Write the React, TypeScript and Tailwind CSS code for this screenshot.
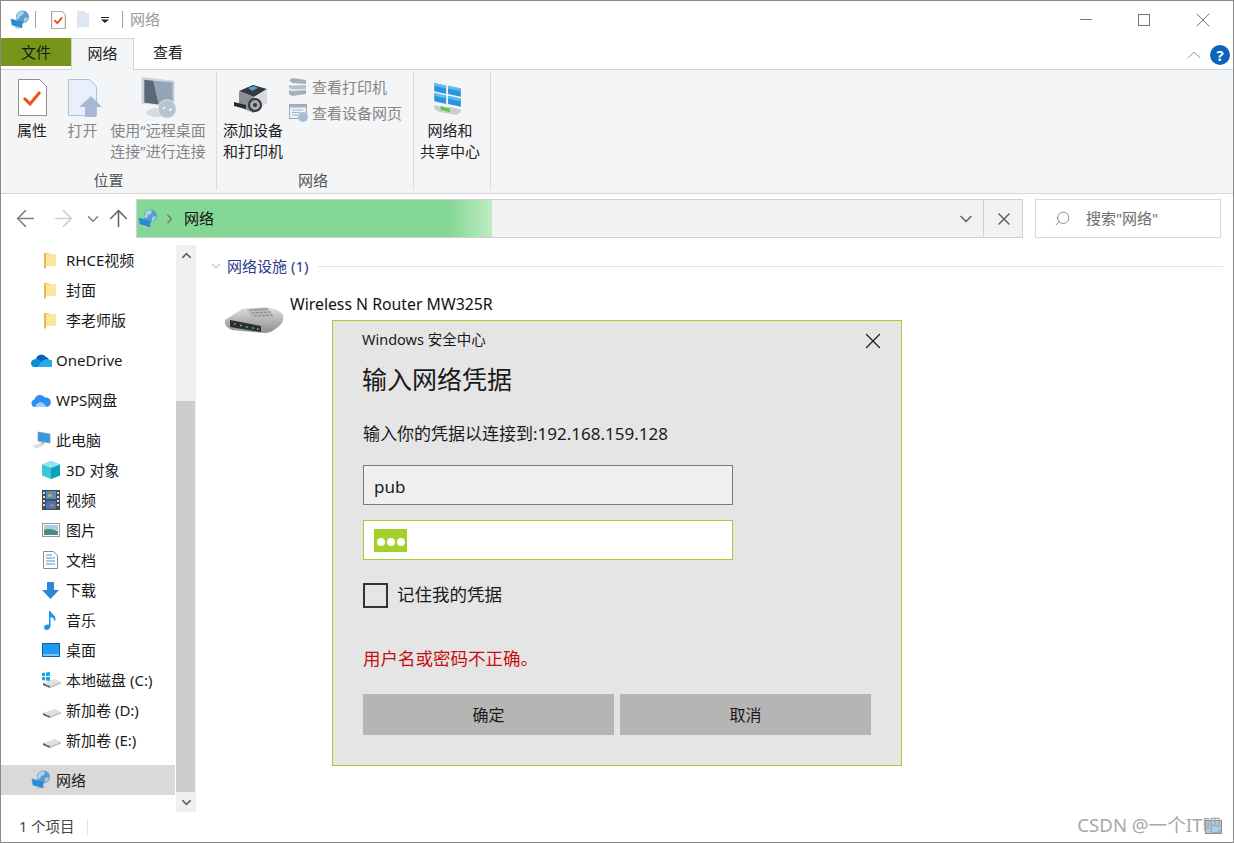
import React from "react";
import { ArrowLeft, ArrowRight, ArrowUp, ChevronDown, ChevronUp, Search, X } from "lucide-react";

const NetworkIcon = ({ size = 20 }: { size?: number }) => (
  <svg width={size} height={size} viewBox="0 0 20 20" className="shrink-0">
    <circle cx="12.5" cy="7" r="6.5" fill="#5b9bd0" />
    <path d="M8 3c2-2 5-2 6-1l-1 3-3 1-1 3-3-1z" fill="#a9d6ee" />
    <path d="M14 8l4-1c0 3-2 5-4 6z" fill="#9fd0e8" />
    <path d="M1 9l11 3v6L2 15z" fill="#1d8fe0" stroke="#5a7f9c" strokeWidth=".6" />
    <path d="M5 16.5l4 1v1.5l-4-1z" fill="#b9c5cf" />
  </svg>
);

const FolderIcon = () => (
  <svg width="13" height="17" viewBox="0 0 13 17" className="ml-[2px] shrink-0">
    <path d="M0 1h5v1h1v12H0z" fill="#f2c55c" />
    <path d="M1 2h11v12H1z" fill="#fde59b" />
    <path d="M0 1l2 1v15l-2-1z" fill="#e8b94e" />
  </svg>
);

const OneDriveIcon = () => (
  <svg width="21" height="14" viewBox="0 0 21 14" className="shrink-0">
    <path d="M5 6a5.5 5.5 0 0 1 10-2 4 4 0 0 1 3 3L9 10z" fill="#0a62b8" />
    <path d="M4 14a3.8 3.8 0 0 1-1-7.5L6 5.500l5 3.500-4 5z" fill="#0b8ade" />
    <path d="M7 14l4-6 4-2 3 1a3.400 3.400 0 0 1 2 7z" fill="#27a9ec" />
  </svg>
);

const WpsIcon = () => (
  <svg width="20" height="14" viewBox="0 0 20 14" className="shrink-0">
    <path d="M4 14a3.800 3.800 0 0 1-.5-7.500A5.800 5.800 0 0 1 14 4.500a4.800 4.800 0 0 1 2 9.500z" fill="#2f8cf0" />
    <path d="M4 14c2-5 6-6 9-3l3 3z" fill="#9ed0fa" />
  </svg>
);

const PcIcon = () => (
  <svg width="20" height="18" viewBox="0 0 20 18" className="shrink-0">
    <path d="M7 1l12 2v9L7 10z" fill="#2f9be0" stroke="#8c9aa5" strokeWidth=".8" />
    <path d="M1 15l8-3 5 2-8 3.500z" fill="#d9dde0" />
    <path d="M10 10.500l3 .5v2l-3-.5z" fill="#a9b2b8" />
  </svg>
);

const CubeIcon = () => (
  <svg width="18" height="18" viewBox="0 0 18 18" className="shrink-0">
    <path d="M9 0l9 3.500v11L9 18l-9-3.500v-11z" fill="#39c6d6" />
    <path d="M9 7l9-3.500v11L9 18z" fill="#0f9fb8" />
    <path d="M9 0l9 3.500L9 7 0 3.500z" fill="#8de6ee" />
  </svg>
);

const FilmIcon = () => (
  <svg width="18" height="20" viewBox="0 0 18 20" className="shrink-0">
    <rect width="18" height="20" fill="#4a4a4a" />
    <rect x="4" y="1" width="10" height="8" fill="#4f8fcf" />
    <rect x="4" y="11" width="10" height="8" fill="#3c76c8" />
    <rect x="6" y="4" width="4" height="3" fill="#e0a030" />
    <rect x="8" y="14" width="4" height="3" fill="#e06a30" />
    <path d="M1 2h2v2H1zM1 6h2v2H1zM1 10h2v2H1zM1 14h2v2H1zM15 2h2v2h-2zM15 6h2v2h-2zM15 10h2v2h-2zM15 14h2v2h-2z" fill="#ddd" />
  </svg>
);

const PictureIcon = () => (
  <svg width="18" height="14" viewBox="0 0 18 14" className="shrink-0">
    <rect x=".5" y=".5" width="17" height="13" fill="#fff" stroke="#9a9a9a" />
    <rect x="2" y="2" width="14" height="5" fill="#a9cfe8" />
    <path d="M2 7c4-2 8-1 14 1v4H2z" fill="#4f8a80" />
  </svg>
);

const DocIcon = () => (
  <svg width="15" height="18" viewBox="0 0 15 18" className="ml-[1px] shrink-0">
    <path d="M.5.500h10l4 4v13H.5z" fill="#fff" stroke="#8a8a8a" />
    <path d="M3 4h6M3 7h9M3 10h9M3 13h9" stroke="#4a8fd0" />
  </svg>
);

const DownloadIcon = () => (
  <svg width="17" height="17" viewBox="0 0 17 17" className="shrink-0">
    <path d="M5 0h7v8h5l-8.500 9L0 8h5z" fill="#2f86d8" />
  </svg>
);

const MusicIcon = () => (
  <svg width="12" height="19" viewBox="0 0 12 19" className="ml-[2px] shrink-0">
    <path d="M5 0h1.500c.5 3 5 4 5 8 0 1-.5 2-1 2.500.3-3-2.500-4-4-4.500V15c0 2.500-2 4-4 4S0 17.500 0 16s2-3 5-2.500z" fill="#1b94e8" />
  </svg>
);

const DesktopIcon = () => (
  <svg width="18" height="14" viewBox="0 0 18 14" className="shrink-0">
    <rect x=".5" y=".5" width="17" height="13" fill="#1e9bf0" stroke="#0a5fa8" />
    <path d="M1 12h16" stroke="#cfe9fb" />
  </svg>
);

const DriveIcon = ({ windows = false }: { windows?: boolean }) => (
  <svg width="20" height="16" viewBox="0 0 20 16" className="shrink-0">
    {windows && <path d="M0 1l3-.5V4H0zM4 .4L8 0v4H4zM0 5h3v3.500L0 8zM4 5h4v4L4 8.500z" fill="#14a7ee" />}
    <path d="M1 11l12-4 6 3-11 4.500z" fill="#dfdfdf" />
    <path d="M1 11l7 3.500V16l-7-3z" fill="#555" />
    <path d="M8 14.500L19 10v1.500L8 16z" fill="#b8b8b8" />
    <rect x="5" y="13" width="2" height="1" fill="#35b04a" />
  </svg>
);

const SideRow = ({ icon, label, indent, selected }: { icon: React.ReactNode; label: string; indent: "sub" | "top"; selected?: boolean }) => (
  <div className={`flex h-[30px] w-[174px] items-center ${selected ? "bg-[#d9d9d9]" : ""} ${indent === "sub" ? "pl-[41px]" : "pl-[30px]"}`}>
    <span className={`flex shrink-0 items-center justify-start ${indent === "sub" ? "w-[24px]" : "w-[25px]"}`}>{icon}</span>
    <span className="whitespace-nowrap text-[15px] leading-none text-[#1a1a1a]">{label}</span>
  </div>
);

const RibbonLarge = ({ icon, lines, width, muted, top }: { icon: React.ReactNode; lines: string[]; width: string; muted?: boolean; top: string }) => (
  <div className={`flex shrink-0 flex-col items-center ${width}`}>
    <div className={`flex h-[46px] items-start justify-center ${top}`}>{icon}</div>
    <div className={`mt-[2px] text-center text-[15px] leading-[21px] whitespace-nowrap ${muted ? "text-[#858585]" : "text-[#222]"}`}>
      {lines.map((l) => (
        <div key={l}>{l}</div>
      ))}
    </div>
  </div>
);

const PropertiesIcon = ({ small }: { small?: boolean }) => (
  <svg width={small ? 15 : 29} height={small ? 18 : 37} viewBox="0 0 29 37" className="shrink-0">
    <path d="M.5.500h21l7 7v29H.5z" fill="#fff" stroke="#8e8e8e" strokeWidth={small ? 2 : 1} />
    <path d="M6 19l6 6L22 13" fill="none" stroke="#e9541c" strokeWidth={small ? 4 : 3} />
  </svg>
);

const OpenIcon = () => (
  <svg width="35" height="39" viewBox="0 0 35 39" className="shrink-0">
    <path d="M.5.500h21l7 7v29H.5z" fill="#e9f0fb" stroke="#aebfd8" />
    <path d="M23 17l11 11h-6v10H17V28h-6z" fill="#a5b8d4" />
  </svg>
);

const RemoteIcon = () => (
  <svg width="40" height="42" viewBox="0 0 40 46" className="shrink-0">
    <path d="M2 0l36 4v28l-36-3z" fill="#c9d2dc" />
    <path d="M5 3l10 1 6 26-16-2z" fill="#5a6877" />
    <path d="M15 4l21 2v23l-15 1z" fill="#95a5b8" />
    <ellipse cx="20" cy="39" rx="13" ry="5" fill="#d5dbe2" />
    <circle cx="30" cy="35" r="10" fill="#b6c3d3" stroke="#e8ecf1" />
    <path d="M25 35l3-2M35 35l-3 2" stroke="#fff" strokeWidth="1.500" />
  </svg>
);

const PrinterIcon = () => (
  <svg width="36" height="30" viewBox="0 0 36 30" className="shrink-0">
    <path d="M5 6l14-6 14 4-13 8z" fill="#35393f" />
    <path d="M14 3l6-2 4 2-6 3z" fill="#4aa0d8" />
    <path d="M5 6l15 6v16L5 22z" fill="#8b8f94" />
    <path d="M20 12l13-8v14l-13 10z" fill="#d9dadb" />
    <path d="M0 17l12 3v4L0 21z" fill="#2b2b2b" />
    <circle cx="21" cy="20" r="6" fill="#a6a9ad" stroke="#2f3236" strokeWidth="2" />
    <circle cx="21" cy="20" r="2" fill="#33363a" />
  </svg>
);

const ViewPrintersIcon = () => (
  <svg width="17" height="18" viewBox="0 0 17 18" className="shrink-0">
    <path d="M0 2l4-2 13 2v4L3 5z" fill="#a5b0bd" />
    <path d="M0 7l3 .5L17 7v4L3 11.500 0 10z" fill="#b6c0cc" />
    <path d="M0 12l3 1 14-1v4l-14 2-3-2z" fill="#a5b0bd" />
  </svg>
);

const ViewPageIcon = () => (
  <svg width="19" height="18" viewBox="0 0 19 18" className="shrink-0">
    <rect x=".5" y=".5" width="17" height="14" fill="#eef2f6" stroke="#9aa9b9" />
    <path d="M1 1h16v2.500H1z" fill="#9fb0c3" />
    <path d="M3 6h11M3 8.500h8M3 11h6" stroke="#a9b6c4" />
    <circle cx="14" cy="13" r="5" fill="#a9bdd1" />
  </svg>
);

const SharingIcon = () => (
  <svg width="30" height="33" viewBox="0 0 32 36" className="shrink-0">
    <path d="M1 0l13 3v9L1 9zM16 3l14 3v9l-14-3zM1 11l13 3v9L1 20zM16 14l14 3v9l-14-3z" fill="#2a95dd" />
    <path d="M1 0l13 3v3L1 3zM16 3l14 3v3L16 6zM1 11l13 3v3L1 14zM16 14l14 3v3l-14-3z" fill="#5fbdf0" />
    <path d="M1 24l12 3 5-1 12 3v3l-5 3-20-4-4-3z" fill="#c8cdd0" />
    <path d="M8 25l10 3v4L8 29z" fill="#5fc24a" />
  </svg>
);

const RouterIcon = () => (
  <svg width="60" height="28" viewBox="0 0 60 28" className="shrink-0">
    <defs>
      <linearGradient id="routerBody" x1="0" y1="0" x2="0" y2="1">
        <stop offset="0" stopColor="#e0e0e0" />
        <stop offset="1" stopColor="#8d8d8d" />
      </linearGradient>
    </defs>
    <path d="M1 14L18 3 42 1c6 1 14 3 17 8 1 6-1 9-5 12-4 3-8 6-13 6L8 24C3 22 0 19 1 14z" fill="url(#routerBody)" />
    <path d="M22 3l21-1 8 9-21 3z" fill="#b9b9b9" />
    <path d="M26 4l18-1M28 7l19-1M30 10l19-1" stroke="#8f8f8f" strokeWidth="1.200" strokeDasharray="3 1" />
    <path d="M6 14l31 6v6L6 21z" fill="#2b2f33" />
    <path d="M10 18h1.500M16 19.500h1.500M22 21h1.500M28 22h1.500M33 23h1.500" stroke="#62e06a" strokeWidth="1.500" />
  </svg>
);

export default function App() {
  return (
    <div className="relative h-[843px] w-[1234px] overflow-hidden border border-[#8a8a8a] bg-white font-['Noto_Sans','Noto_Sans_CJK_SC',sans-serif] text-[#222]">
      {/* title bar */}
      <div className="flex h-[37px] items-center pl-[9px]">
        <NetworkIcon />
        <span className="ml-[5px] h-[17px] w-px bg-[#a0a0a0]" />
        <span className="ml-[15px]">
          <PropertiesIcon small />
        </span>
        <svg width="13" height="18" viewBox="0 0 13 18" className="ml-[11px] shrink-0">
          <path d="M0 0h8v2h4v14H3l-3 2z" fill="#dce6f5" />
        </svg>
        <svg width="8" height="6" viewBox="0 0 8 6" className="ml-[11px] shrink-0">
          <path d="M0 0h8v1H0zM0 2.500h8L4 6z" fill="#222" />
        </svg>
        <span className="ml-[13px] h-[17px] w-px bg-[#a0a0a0]" />
        <span className="ml-[7px] text-[15px] text-[#9a9a9a]">网络</span>
        <div className="ml-auto flex items-center pr-[1px] text-[#777]">
          <div className="flex w-[58px] justify-center">
            <span className="h-px w-[12px] bg-[#777]" />
          </div>
          <div className="flex w-[58px] justify-center">
            <span className="h-[12px] w-[12px] border border-[#777]" />
          </div>
          <div className="flex w-[59px] justify-center">
            <X size={24} strokeWidth={1} />
          </div>
        </div>
      </div>

      {/* tabs */}
      <div className="flex h-[32px] items-start border-b border-[#d5d5d5]">
        <div className="flex h-[28px] w-[70px] items-center justify-center bg-[#76951a] text-[15px] text-[#1a1a1a]">文件</div>
        <div className="flex h-[32px] w-[63px] items-center justify-center border-x border-t border-[#d5d5d5] bg-[#f4f5f7] pb-[3px] text-[15px]">网络</div>
        <div className="flex h-[28px] w-[68px] items-center justify-center text-[15px]">查看</div>
        <div className="ml-auto flex items-center pt-[5px] pr-[3px]">
          <ChevronUp size={24} strokeWidth={1} className="mr-[4px] text-[#9a9a9a]" />
          <div className="flex h-[20px] w-[20px] items-center justify-center rounded-full bg-[#0a63bd] text-[15px] leading-none font-bold text-white">?</div>
        </div>
      </div>

      {/* ribbon */}
      <div className="flex h-[124px] border-b border-[#d5d5d5] bg-[#f4f5f7] pt-[2px]">
        <div className="flex h-[118px] w-[216px] shrink-0 flex-col border-r border-[#dcdcdc]">
          <div className="flex h-[98px] pl-[3px]">
            <RibbonLarge width="w-[56px]" top="pt-[7px]" lines={["属性"]} icon={<PropertiesIcon />} />
            <RibbonLarge width="w-[45px]" top="pt-[7px] pl-[5px]" lines={["打开"]} muted icon={<OpenIcon />} />
            <RibbonLarge width="w-[106px]" top="pt-[5px]" lines={["使用“远程桌面", "连接”进行连接"]} muted icon={<RemoteIcon />} />
          </div>
          <div className="mt-[1px] text-center text-[15px] leading-[19px] text-[#555]">位置</div>
        </div>
        <div className="flex h-[118px] w-[197px] shrink-0 flex-col border-r border-[#dcdcdc]">
          <div className="flex h-[98px]">
            <RibbonLarge width="w-[72px]" top="pt-[13px] pr-[2px]" lines={["添加设备", "和打印机"]} icon={<PrinterIcon />} />
            <div className="flex flex-col gap-[8px] pt-[6px] text-[15px] leading-[18px] text-[#858585]">
              <div className="flex items-center gap-[6px]">
                <ViewPrintersIcon />
                <span className="whitespace-nowrap">查看打印机</span>
              </div>
              <div className="flex items-center gap-[4px]">
                <ViewPageIcon />
                <span className="whitespace-nowrap">查看设备网页</span>
              </div>
            </div>
          </div>
          <div className="mt-[1px] pr-[4px] text-center text-[15px] leading-[19px] text-[#555]">网络</div>
        </div>
        <div className="h-[118px] w-[77px] shrink-0 border-r border-[#dcdcdc]">
          <RibbonLarge width="w-[72px]" top="pt-[11px] pr-[4px]" lines={["网络和", "共享中心"]} icon={<SharingIcon />} />
        </div>
      </div>

      {/* address row */}
      <div className="h-[51px] pt-[5px] text-[#808080]">
        <div className="flex h-[39px] items-center">
          <div className="flex w-[48px] justify-center">
            <ArrowLeft size={27} strokeWidth={1.4} className="shrink-0" />
          </div>
          <div className="flex w-[29px] justify-center">
            <ArrowRight size={27} strokeWidth={1.4} className="shrink-0 text-[#d0d0d0]" />
          </div>
          <div className="flex w-[30px] justify-center">
            <ChevronDown size={18} strokeWidth={2} className="shrink-0" />
          </div>
          <div className="flex w-[21px] justify-center">
            <ArrowUp size={27} strokeWidth={1.4} className="shrink-0 text-[#666]" />
          </div>
          <div className="ml-[7px] flex h-[39px] w-[887px] items-stretch border border-[#d0d0d0] bg-[#f2f2f2]">
            <div className="flex w-[355px] items-center bg-[linear-gradient(90deg,#85d795_0%,#85d795_88%,#bdecc4_100%)] pl-[1px]">
              <NetworkIcon />
              <svg width="8" height="10" viewBox="0 0 8 10" className="ml-[8px]">
                <path d="M1.500 1l4 4-4 4" fill="none" stroke="#777" strokeWidth="1.500" />
              </svg>
              <span className="ml-[10px] text-[15px] text-[#111]">网络</span>
            </div>
            <div className="ml-auto flex w-[66px] items-center">
              <ChevronDown size={20} strokeWidth={2} className="shrink-0 text-[#666]" />
              <span className="ml-[7px] h-full w-px shrink-0 bg-[#d0d0d0]" />
              <X size={20} strokeWidth={2} className="ml-[10px] shrink-0 text-[#666]" />
            </div>
          </div>
          <div className="ml-[12px] flex h-[39px] w-[186px] items-center border border-[#d9d9d9] bg-white pl-[18px] text-[#666]">
            <Search size={17} strokeWidth={1} className="-scale-x-100" />
            <span className="ml-[15px] text-[15px] text-[#6d6d6d]">搜索"网络"</span>
          </div>
        </div>
      </div>

      {/* body */}
      <div className="flex h-[567px]">
        <div className="flex w-[175px] shrink-0 flex-col">
          <SideRow indent="sub" icon={<FolderIcon />} label="RHCE视频" />
          <SideRow indent="sub" icon={<FolderIcon />} label="封面" />
          <SideRow indent="sub" icon={<FolderIcon />} label="李老师版" />
          <div className="mt-[10px]">
            <SideRow indent="top" icon={<OneDriveIcon />} label="OneDrive" />
          </div>
          <div className="mt-[10px]">
            <SideRow indent="top" icon={<WpsIcon />} label="WPS网盘" />
          </div>
          <div className="mt-[10px]">
            <SideRow indent="top" icon={<PcIcon />} label="此电脑" />
            <SideRow indent="sub" icon={<CubeIcon />} label="3D 对象" />
            <SideRow indent="sub" icon={<FilmIcon />} label="视频" />
            <SideRow indent="sub" icon={<PictureIcon />} label="图片" />
            <SideRow indent="sub" icon={<DocIcon />} label="文档" />
            <SideRow indent="sub" icon={<DownloadIcon />} label="下载" />
            <SideRow indent="sub" icon={<MusicIcon />} label="音乐" />
            <SideRow indent="sub" icon={<DesktopIcon />} label="桌面" />
            <SideRow indent="sub" icon={<DriveIcon windows />} label="本地磁盘 (C:)" />
            <SideRow indent="sub" icon={<DriveIcon />} label="新加卷 (D:)" />
            <SideRow indent="sub" icon={<DriveIcon />} label="新加卷 (E:)" />
          </div>
          <div className="mt-[10px]">
            <SideRow indent="top" selected icon={<NetworkIcon />} label="网络" />
          </div>
        </div>

        {/* scrollbar */}
        <div className="flex w-[20px] shrink-0 flex-col bg-[#f0f0f0]">
          <div className="flex h-[20px] items-center justify-center">
            <ChevronUp size={15} strokeWidth={2.4} className="text-[#606060]" />
          </div>
          <div className="mt-[136px] w-[19px] flex-1 bg-[#cdcdcd]" />
          <div className="flex h-[20px] items-center justify-center">
            <ChevronDown size={15} strokeWidth={2.4} className="text-[#606060]" />
          </div>
        </div>

        {/* content */}
        <div className="flex-1 pt-[11px] pl-[13px]">
          <div className="flex items-center pr-[10px]">
            <ChevronDown size={14} strokeWidth={1} className="text-[#555]" />
            <span className="ml-[4px] text-[15px] leading-[20px] whitespace-nowrap text-[#2b3a8c]">网络设施 (1)</span>
            <span className="ml-[10px] h-px flex-1 bg-[#e2e2e2]" />
          </div>
          <div className="mt-[18px] flex pl-[15px]">
            <span className="mt-[12px]">
              <RouterIcon />
            </span>
            <span className="ml-[6px] text-[15.800px] leading-[20px] whitespace-nowrap text-[#111]">Wireless N Router MW325R</span>
          </div>
        </div>
      </div>

      {/* status bar */}
      <div className="flex h-[30px] items-center pl-[18px] text-[14.500px] text-[#444]">
        <span>1 个项目</span>
        <span className="ml-[12px] h-[16px] w-px bg-[#e5e5e5]" />
      </div>

      {/* credential dialog */}
      <div className="absolute top-[319px] left-[331px] flex h-[446px] w-[570px] flex-col border border-[#a4d02c] bg-[#e5e5e5] pl-[29px] text-[#1a1a1a]">
        <div className="flex h-[38px] items-center">
          <span className="text-[14.500px]">Windows 安全中心</span>
          <X size={26} strokeWidth={1.1} className="absolute top-[7px] right-[15px] text-[#222]" />
        </div>
        <div className="mt-[1px] text-[25px] leading-[38px]">输入网络凭据</div>
        <div className="mt-[24px] ml-[1px] text-[17px] leading-[24px]">输入你的凭据以连接到:192.168.159.128</div>
        <div className="mt-[19px] ml-[1px] flex h-[40px] w-[370px] items-center border border-[#7a7a7a] bg-[#f0f0f0] pt-[3px] pl-[10px] text-[17px]">pub</div>
        <div className="mt-[15px] ml-[1px] flex h-[40px] w-[370px] items-center border border-[#a4d02c] bg-white pl-[10px]">
          <div className="flex h-[23px] w-[33px] items-center justify-center gap-[2px] bg-[#a4d02c] pt-[3px]">
            <span className="h-[8px] w-[8px] rounded-full bg-white" />
            <span className="h-[8px] w-[8px] rounded-full bg-white" />
            <span className="h-[8px] w-[8px] rounded-full bg-white" />
          </div>
        </div>
        <div className="mt-[23px] ml-[1px] flex items-center">
          <span className="h-[25px] w-[25px] border-2 border-[#333] bg-[#e5e5e5]" />
          <span className="-mt-[2px] ml-[9px] text-[17.500px] leading-[25px]">记住我的凭据</span>
        </div>
        <div className="mt-[38px] ml-[1px] text-[17.500px] leading-[24px] text-[#c50f0f]">用户名或密码不正确。</div>
        <div className="mt-[24px] ml-[1px] flex gap-[6px]">
          <div className="flex h-[41px] w-[251px] items-center justify-center bg-[#b5b5b5] text-[16px]">确定</div>
          <div className="flex h-[41px] w-[251px] items-center justify-center bg-[#b5b5b5] text-[16px]">取消</div>
        </div>
      </div>

      {/* watermark */}
      <div className="absolute right-[11px] bottom-[8px] h-[14px] w-[17px] border border-[#8a8a8a] bg-[#a9cfe8]" />
      <div className="absolute right-[12px] bottom-[3px] flex items-center text-[18.600px] whitespace-nowrap text-[#a8a8a8]">
        CSDN @一个IT吧
      </div>
    </div>
  );
}
